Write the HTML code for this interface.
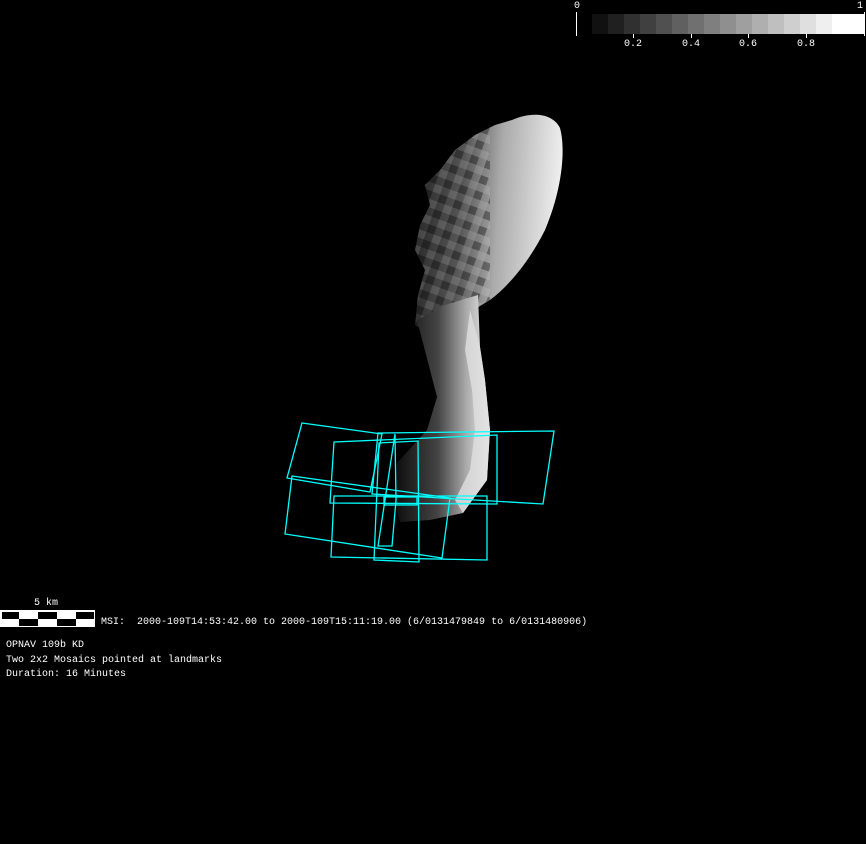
<!DOCTYPE html>
<html><head><style>
html,body{margin:0;padding:0;background:#000;width:866px;height:844px;overflow:hidden}
.t{position:absolute;color:#fff;font-family:"Liberation Mono","DejaVu Sans Mono",monospace;font-size:10px;white-space:pre;line-height:12px}
</style></head><body>
<svg width="866" height="844" style="position:absolute;left:0;top:0">
<defs>
<linearGradient id="lobe" x1="0" y1="0" x2="1" y2="0.1">
<stop offset="0" stop-color="#222"/><stop offset="0.35" stop-color="#555"/><stop offset="0.6" stop-color="#aaa"/><stop offset="1" stop-color="#eee"/>
</linearGradient>
<linearGradient id="neck" x1="0" y1="0" x2="1" y2="0">
<stop offset="0" stop-color="#0d0d0d"/><stop offset="0.45" stop-color="#444"/><stop offset="0.75" stop-color="#aaa"/><stop offset="1" stop-color="#eee"/>
</linearGradient>
<pattern id="chk" width="16" height="16" patternUnits="userSpaceOnUse" patternTransform="rotate(20)">
<rect width="8" height="8" fill="#000" opacity="0.35"/><rect x="8" y="8" width="8" height="8" fill="#fff" opacity="0.12"/>
</pattern>
<clipPath id="lc"><path d="M512,120 C530,112 552,112 560,128 C566,150 562,190 545,230 C530,260 510,285 490,300 L470,312 C455,318 440,325 425,330 L415,325 L418,295 L425,270 L415,250 L420,225 L430,205 L425,185 L440,170 L455,150 L475,135 L495,125 Z"/></clipPath>
</defs>
<g>
<rect x="592" y="14" width="16" height="20" fill="#111"/>
<rect x="608" y="14" width="16" height="20" fill="#202020"/>
<rect x="624" y="14" width="16" height="20" fill="#303030"/>
<rect x="640" y="14" width="16" height="20" fill="#404040"/>
<rect x="656" y="14" width="16" height="20" fill="#505050"/>
<rect x="672" y="14" width="16" height="20" fill="#606060"/>
<rect x="688" y="14" width="16" height="20" fill="#707070"/>
<rect x="704" y="14" width="16" height="20" fill="#7f7f7f"/>
<rect x="720" y="14" width="16" height="20" fill="#8f8f8f"/>
<rect x="736" y="14" width="16" height="20" fill="#9f9f9f"/>
<rect x="752" y="14" width="16" height="20" fill="#afafaf"/>
<rect x="768" y="14" width="16" height="20" fill="#bfbfbf"/>
<rect x="784" y="14" width="16" height="20" fill="#cfcfcf"/>
<rect x="800" y="14" width="16" height="20" fill="#dfdfdf"/>
<rect x="816" y="14" width="16" height="20" fill="#efefef"/>
<rect x="832" y="14" width="32" height="20" fill="#fff"/>
<line x1="576.5" y1="12" x2="576.5" y2="36" stroke="#fff"/>
<line x1="864.5" y1="12" x2="864.5" y2="36" stroke="#fff"/>
<line x1="633.5" y1="34" x2="633.5" y2="38" stroke="#fff"/>
<line x1="691.5" y1="34" x2="691.5" y2="38" stroke="#fff"/>
<line x1="748.5" y1="34" x2="748.5" y2="38" stroke="#fff"/>
<line x1="806.5" y1="34" x2="806.5" y2="38" stroke="#fff"/>
</g>
<path d="M512,120 C530,112 552,112 560,128 C566,150 562,190 545,230 C530,260 510,285 490,300 L470,312 C455,318 440,325 425,330 L415,325 L418,295 L425,270 L415,250 L420,225 L430,205 L425,185 L440,170 L455,150 L475,135 L495,125 Z" fill="url(#lobe)"/>
<g clip-path="url(#lc)"><rect x="400" y="100" width="90" height="240" fill="url(#chk)"/></g>
<path d="M478,295 L480,347 L485,380 L490,430 L487,480 L463,513 L430,520 L400,522 L395,505 L397,463 L427,430 L437,397 L430,370 L417,320 L445,305 Z" fill="url(#neck)"/>
<path d="M470,310 L480,347 L485,380 L490,430 L487,480 L463,513 L455,500 L470,470 L475,430 L472,390 L465,350 Z" fill="#e0e0e0" opacity="0.8"/>
<g fill="none" stroke="#00ffff" stroke-width="1.3">
<polygon points="302,423 382,434 370,492 287,478"/>
<polygon points="378,433 554,431 543,504 372,494"/>
<polygon points="334,442 497,435 497,504 330,503"/>
<polygon points="292,476 450,498 442,558 285,534"/>
<polygon points="334,496 487,496 487,560 331,557"/>
<polygon points="379,443 418,441 419,562 374,560"/>
<polygon points="395,434 396,500 392,546 378,546"/>
<polygon points="384,497 417,497 417,505 384,505"/>
</g>
<rect x="0.5" y="610.5" width="94" height="16" fill="#fff" stroke="#fff"/>
<rect x="2" y="612" width="17" height="7" fill="#000"/>
<rect x="38" y="612" width="19" height="7" fill="#000"/>
<rect x="76" y="612" width="18" height="7" fill="#000"/>
<rect x="19" y="619" width="19" height="7" fill="#000"/>
<rect x="57" y="619" width="19" height="7" fill="#000"/>
</svg>
<div class="t" style="left:574px;top:1px">0</div>
<div class="t" style="left:857px;top:1px">1</div>
<div class="t" style="left:624px;top:39px">0.2</div>
<div class="t" style="left:682px;top:39px">0.4</div>
<div class="t" style="left:739px;top:39px">0.6</div>
<div class="t" style="left:797px;top:39px">0.8</div>
<div class="t" style="left:34px;top:598px">5 km</div>
<div class="t" style="left:101px;top:617px">MSI:  2000-109T14:53:42.00 to 2000-109T15:11:19.00 (6/0131479849 to 6/0131480906)</div>
<div class="t" style="left:6px;top:640px">OPNAV 109b KD</div>
<div class="t" style="left:6px;top:655px">Two 2x2 Mosaics pointed at landmarks</div>
<div class="t" style="left:6px;top:669px">Duration: 16 Minutes</div>
</body></html>
